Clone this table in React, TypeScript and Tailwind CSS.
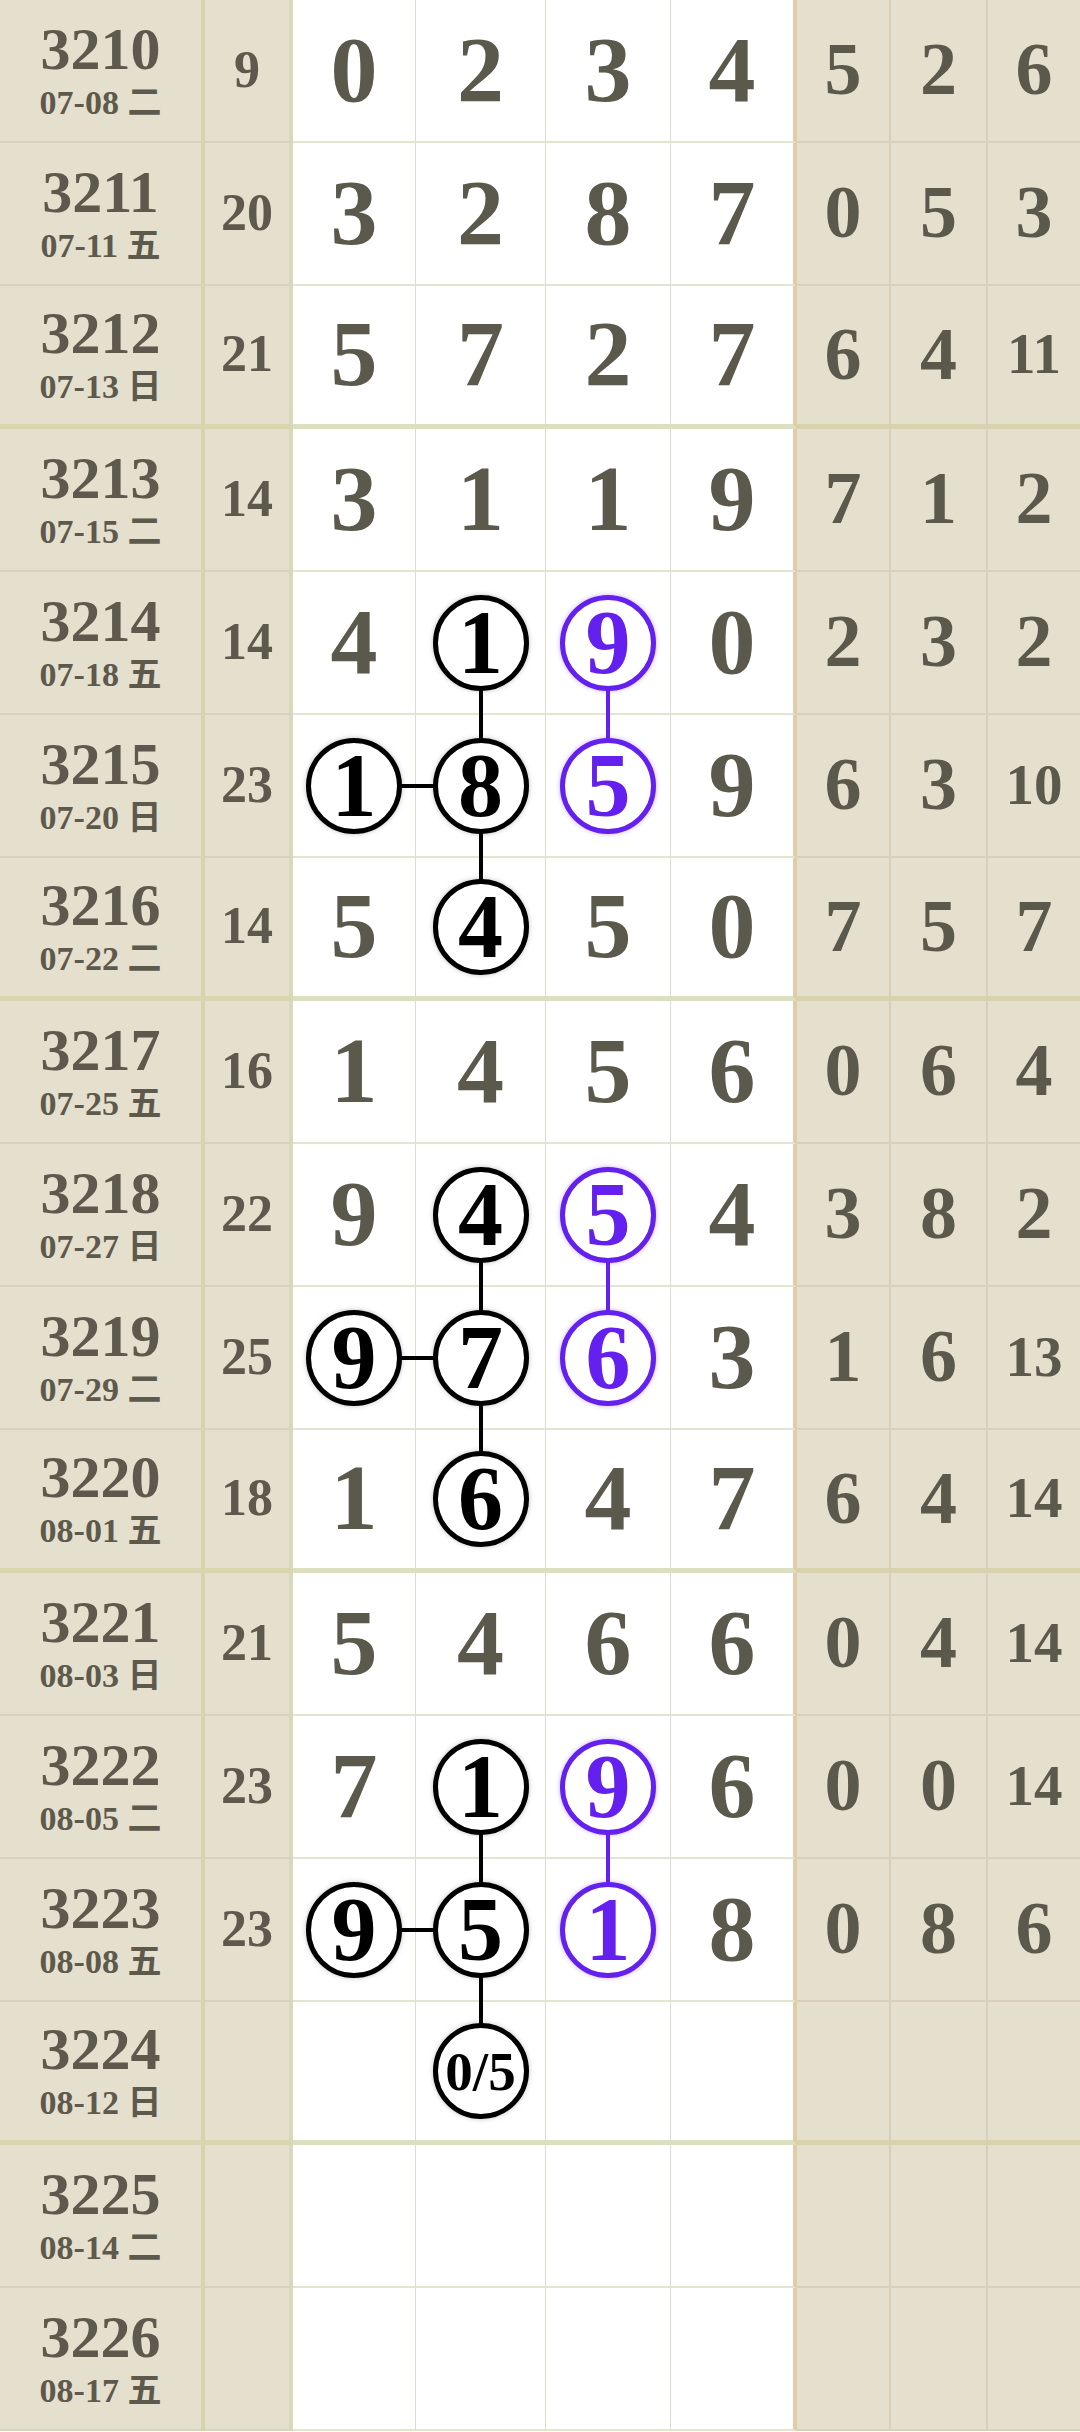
import React from "react";

type Cell = { v: string; c?: "k" | "p"; u?: boolean; d?: boolean; l?: boolean; r?: boolean };
type Row = { id: string; date: string; wd: string; s: string; m: Cell[]; t: string[]; thick?: boolean };

const P = (spec: string): Cell => {
  if (spec === "") return { v: "" };
  const parts = spec.split(":");
  const cell: Cell = { v: parts[0] };
  if (parts[1] === "k" || parts[1] === "p") cell.c = parts[1] as "k" | "p";
  const f = parts[2] || "";
  if (f.includes("u")) cell.u = true;
  if (f.includes("d")) cell.d = true;
  if (f.includes("l")) cell.l = true;
  if (f.includes("r")) cell.r = true;
  return cell;
};

const R = (id: string, date: string, wd: string, s: string, m: string[], t: string[], thick = false): Row => ({
  id,
  date,
  wd,
  s,
  m: m.map(P),
  t,
  thick,
});

const rows: Row[] = [
  R("3210", "07-08", "二", "9", ["0", "2", "3", "4"], ["5", "2", "6"]),
  R("3211", "07-11", "五", "20", ["3", "2", "8", "7"], ["0", "5", "3"]),
  R("3212", "07-13", "日", "21", ["5", "7", "2", "7"], ["6", "4", "11"], true),
  R("3213", "07-15", "二", "14", ["3", "1", "1", "9"], ["7", "1", "2"]),
  R("3214", "07-18", "五", "14", ["4", "1:k:d", "9:p:d", "0"], ["2", "3", "2"]),
  R("3215", "07-20", "日", "23", ["1:k:r", "8:k:uld", "5:p:u", "9"], ["6", "3", "10"]),
  R("3216", "07-22", "二", "14", ["5", "4:k:u", "5", "0"], ["7", "5", "7"], true),
  R("3217", "07-25", "五", "16", ["1", "4", "5", "6"], ["0", "6", "4"]),
  R("3218", "07-27", "日", "22", ["9", "4:k:d", "5:p:d", "4"], ["3", "8", "2"]),
  R("3219", "07-29", "二", "25", ["9:k:r", "7:k:uld", "6:p:u", "3"], ["1", "6", "13"]),
  R("3220", "08-01", "五", "18", ["1", "6:k:u", "4", "7"], ["6", "4", "14"], true),
  R("3221", "08-03", "日", "21", ["5", "4", "6", "6"], ["0", "4", "14"]),
  R("3222", "08-05", "二", "23", ["7", "1:k:d", "9:p:d", "6"], ["0", "0", "14"]),
  R("3223", "08-08", "五", "23", ["9:k:r", "5:k:uld", "1:p:u", "8"], ["0", "8", "6"]),
  R("3224", "08-12", "日", "", ["", "0/5:k:u", "", ""], ["", "", ""], true),
  R("3225", "08-14", "二", "", ["", "", "", ""], ["", "", ""]),
  R("3226", "08-17", "五", "", ["", "", "", ""], ["", "", ""]),
];

const whiteRight = [
  "border-r border-r-[#dcdccf]",
  "border-r border-r-[#dcdccf]",
  "border-r border-r-[#dcdccf]",
  "border-r-[4px] border-r-[#e3cba8]",
];

const tanRight = ["border-r-[2px] border-r-[#d8cfbb]", "border-r-[2px] border-r-[#d8cfbb]", ""];

function MainCell({ cell, thick, col }: { cell: Cell; thick: boolean; col: number }) {
  const bottom = thick ? "border-b-[5px] border-b-[#dcdfc0]" : "border-b-[2px] border-b-[#e4e4d0]";
  const lineColor = cell.c === "p" ? "bg-[#6420ee]" : "bg-black";
  return (
    <div className={`relative flex h-[143px] items-center justify-center bg-white ${whiteRight[col]} ${bottom}`}>
      {cell.u && <div className={`absolute left-1/2 -top-[1px] bottom-1/2 z-10 w-[4px] -translate-x-1/2 ${lineColor}`} />}
      {cell.d && <div className={`absolute left-1/2 top-1/2 -bottom-[6px] z-10 w-[4px] -translate-x-1/2 ${lineColor}`} />}
      {cell.l && <div className={`absolute top-1/2 -left-[1px] right-1/2 z-10 h-[4px] -translate-y-1/2 ${lineColor}`} />}
      {cell.r && <div className={`absolute top-1/2 left-1/2 -right-[2px] z-10 h-[4px] -translate-y-1/2 ${lineColor}`} />}
      {cell.c ? (
        <div
          className={`relative z-20 flex h-[96px] w-[96px] items-center justify-center rounded-full border-[5px] bg-white ${
            cell.c === "p"
              ? "border-[#6420ee] text-[#6420ee] shadow-[0_0_5px_rgba(100,32,238,0.35)]"
              : "border-black text-black shadow-[0_0_5px_rgba(0,0,0,0.25)]"
          }`}
        >
          <span className={`font-bold leading-none ${cell.v.length > 1 ? "text-[55px]" : "text-[90px]"}`}>{cell.v}</span>
        </div>
      ) : (
        <span className="-mt-[4px] text-[94px] font-bold leading-none text-[#5b594c]">{cell.v}</span>
      )}
    </div>
  );
}

export default function App() {
  return (
    <div className="w-[1080px] bg-[#e5dfcd] font-[family-name:'Liberation_Serif','Noto_Sans_CJK_SC',serif]">
      <div className="grid grid-cols-[205px_88px_123px_130px_125px_126px_94px_97px_92px]">
        {rows.map((row) => {
          const beigeBottom = row.thick
            ? "border-b-[5px] border-b-[#d9d5ae]"
            : "border-b-[2px] border-b-[#d9d2be]";
          const tanBottom = row.thick
            ? "border-b-[5px] border-b-[#d8d2ae]"
            : "border-b-[2px] border-b-[#d8d0bc]";
          return (
            <React.Fragment key={row.id}>
              <div
                className={`flex h-[143px] flex-col items-center justify-center bg-[#e5dfcd] text-[#5d5a4d] border-r-[4px] border-r-[#d8d4a9] ${beigeBottom}`}
              >
                <div className="text-[60px] font-bold leading-[60px]">{row.id}</div>
                <div className="mt-[4px] text-[34px] font-bold leading-[40px]">
                  {row.date} {row.wd}
                </div>
              </div>
              <div
                className={`flex h-[143px] items-center justify-center bg-[#e5dfcd] text-[#5d5a4d] border-r-[4px] border-r-[#d6dabb] ${beigeBottom}`}
              >
                <span className="-mt-[2px] text-[52px] font-bold leading-none">{row.s}</span>
              </div>
              {row.m.map((cell, i) => (
                <MainCell key={i} cell={cell} thick={!!row.thick} col={i} />
              ))}
              {row.t.map((v, i) => (
                <div
                  key={`t${i}`}
                  className={`flex h-[143px] items-center justify-center bg-[#e5dfcd] text-[#5b594c] ${tanRight[i]} ${tanBottom}`}
                >
                  <span className={`-mt-[3px] font-bold leading-none ${v.length > 1 ? "text-[57px]" : "text-[74px]"}`}>{v}</span>
                </div>
              ))}
            </React.Fragment>
          );
        })}
      </div>
    </div>
  );
}
